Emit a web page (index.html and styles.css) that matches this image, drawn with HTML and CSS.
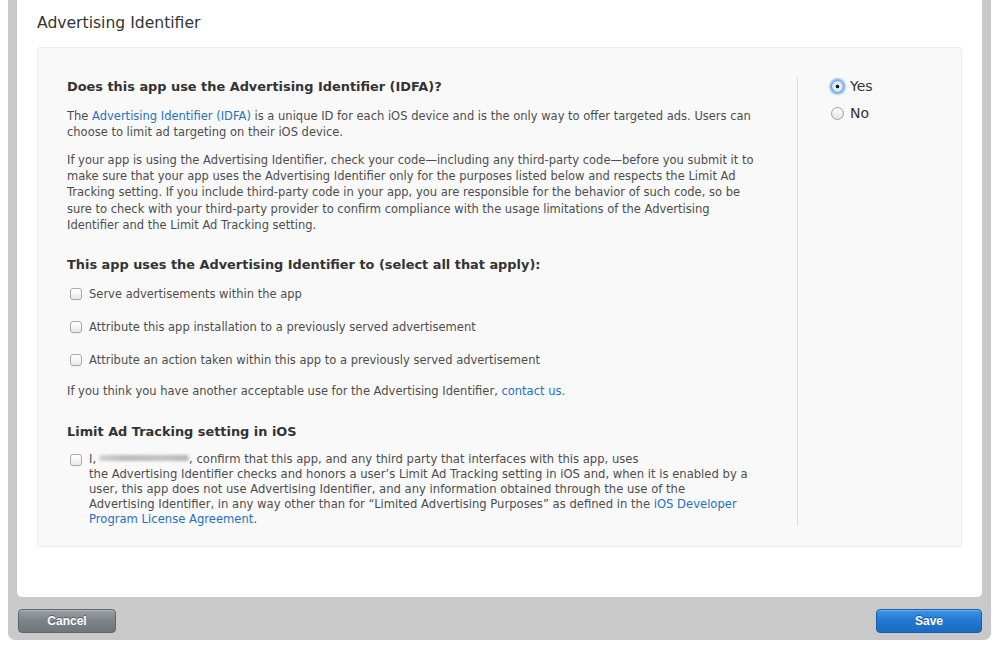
FILE: index.html
```html
<!DOCTYPE html>
<html>
<head>
<meta charset="utf-8">
<link rel="stylesheet" href="styles.css">
</head>
<body>
<div class="frame">
  <div class="panel">
    <h1 class="title">Advertising Identifier</h1>
    <div class="box">
      <div class="main">
        <h2 class="q">Does this app use the Advertising Identifier (IDFA)?</h2>
        <p class="p1">The <a class="link">Advertising Identifier (IDFA)</a> is a unique ID for each iOS device and is the only way to offer targeted ads. Users can<br>choose to limit ad targeting on their iOS device.</p>
        <p class="p2">If your app is using the Advertising Identifier, check your code—including any third-party code—before you submit it to<br>make sure that your app uses the Advertising Identifier only for the purposes listed below and respects the Limit Ad<br>Tracking setting. If you include third-party code in your app, you are responsible for the behavior of such code, so be<br>sure to check with your third-party provider to confirm compliance with the usage limitations of the Advertising<br>Identifier and the Limit Ad Tracking setting.</p>
        <h2 class="h2">This app uses the Advertising Identifier to (select all that apply):</h2>
        <div class="checks">
          <div class="row"><span class="cb"></span><span>Serve advertisements within the app</span></div>
          <div class="row"><span class="cb"></span><span>Attribute this app installation to a previously served advertisement</span></div>
          <div class="row"><span class="cb"></span><span>Attribute an action taken within this app to a previously served advertisement</span></div>
        </div>
        <p class="other">If you think you have another acceptable use for the Advertising Identifier, <a class="link">contact us</a>.</p>
        <h2 class="h3">Limit Ad Tracking setting in iOS</h2>
        <div class="confirm">
          <span class="cb"></span>
          <p class="ctext">I,<span class="blur"></span>, confirm that this app, and any third party that interfaces with this app, uses<br>the Advertising Identifier checks and honors a user’s Limit Ad Tracking setting in iOS and, when it is enabled by a<br>user, this app does not use Advertising Identifier, and any information obtained through the use of the<br>Advertising Identifier, in any way other than for “Limited Advertising Purposes” as defined in the <a class="link">iOS Developer<br>Program License Agreement</a>.</p>
        </div>
      </div>
      <div class="side">
        <div class="radio-row"><span class="radio on"></span><span>Yes</span></div>
        <div class="radio-row"><span class="radio"></span><span>No</span></div>
      </div>
    </div>
  </div>
  <div class="footer">
    <button class="btn cancel">Cancel</button>
    <button class="btn save">Save</button>
  </div>
</div>
</body>
</html>
```
FILE: styles.css
```css
* { box-sizing: border-box; }
html, body { margin: 0; padding: 0; background: #ffffff; }
body {
  font-family: "DejaVu Sans", "Liberation Sans", sans-serif;
  font-size: 11.5px;
  color: #4d4d4d;
}
.frame {
  margin: 0 7px 0 8px;
  height: 640px;
  background: #c9c9c9;
  border-radius: 0 0 7px 7px;
  padding: 0 9px 0 9px;
  display: flex;
  flex-direction: column;
}
.panel {
  height: 597px;
  background: #ffffff;
  border-radius: 0 0 5px 5px;
  padding: 13px 20px 0 20px;
}
.title {
  margin: 0;
  font-weight: normal;
  font-size: 15.6px;
  line-height: 20px;
  color: #333333;
}
.box {
  margin-top: 14px;
  height: 500px;
  background: #f9f9f9;
  border: 1px solid #ececec;
  border-radius: 3px;
  display: flex;
  padding: 29px 0 0 29px;
}
.main {
  width: 731px;
  height: 449px;
  border-right: 1px solid #dedede;
  white-space: nowrap;
}
.q, .h2, .h3 {
  margin: 0;
  font-size: 12.9px;
  line-height: 20px;
  color: #333333;
  font-weight: bold;
}
.p1 { margin: 11px 0 0; line-height: 16px; }
.p2 { margin: 12px 0 0; line-height: 16.2px; }
.h2 { margin-top: 22px; }
.checks {
  margin-top: 11px;
  display: flex;
  flex-direction: column;
  gap: 17px;
  padding-left: 3px;
}
.row {
  display: flex;
  align-items: center;
  gap: 7px;
  line-height: 16px;
}
.cb {
  display: inline-block;
  flex: none;
  width: 12px;
  height: 12px;
  border: 1px solid #a9a9a9;
  border-radius: 3px;
  background: linear-gradient(#ffffff, #e9e9e9);
  box-shadow: 0 1px 0 rgba(0,0,0,0.04);
}
.other { margin: 15px 0 0; line-height: 16px; }
.h3 { margin-top: 23px; }
.confirm {
  margin-top: 10px;
  display: flex;
  align-items: flex-start;
  gap: 7px;
  padding-left: 3px;
}
.confirm .cb { margin-top: 2px; }
.ctext { margin: 0; line-height: 15px; font-size: 11.6px; }
.blur {
  display: inline-block;
  width: 90px;
  height: 6px;
  margin: 0 0 0 3px;
  background: linear-gradient(90deg, #d0d0d0, #b9b9b9 30%, #c2c2c2 70%, #b5b5b5);
  border-radius: 3px;
  filter: blur(1.6px);
  vertical-align: 2px;
}
.link { color: #2570c4; text-decoration: none; }
.side {
  padding: 0 0 0 33px;
  margin-top: -1px;
  display: flex;
  flex-direction: column;
  gap: 7px;
}
.radio-row {
  display: flex;
  align-items: center;
  gap: 6px;
  font-size: 14px;
  line-height: 20px;
  color: #333333;
}
.radio {
  display: inline-block;
  width: 13px;
  height: 13px;
  border-radius: 50%;
  border: 1px solid #9f9f9f;
  background: linear-gradient(#ffffff, #e4e4e4);
  position: relative;
}
.radio.on {
  border: 1px solid #5b93d8;
  background: radial-gradient(circle, #1a1a1a 0 1.6px, #e8f1fc 2.2px, #bcd6f4 100%);
  box-shadow: 0 0 2px 1.5px #7fb0ea;
}
.footer {
  display: flex;
  justify-content: space-between;
  padding: 12px 0 0 1px;
}
.btn {
  height: 24px;
  border-radius: 4px;
  font-family: "Liberation Sans", Arial, sans-serif;
  font-weight: bold;
  font-size: 12px;
  color: #ffffff;
  text-shadow: 0 -1px 0 rgba(0,0,0,0.35);
  padding: 0;
  cursor: pointer;
}
.cancel {
  width: 98px;
  border: 1px solid #5f666c;
  background: linear-gradient(#9aa0a6, #7b8288 50%, #6f767c);
  box-shadow: inset 0 1px 0 rgba(255,255,255,0.25);
}
.save {
  width: 106px;
  border: 1px solid #1a5ea8;
  background: linear-gradient(#3b95e8, #2277d0 50%, #1b6cc2);
  box-shadow: inset 0 1px 0 rgba(255,255,255,0.25);
}
```
